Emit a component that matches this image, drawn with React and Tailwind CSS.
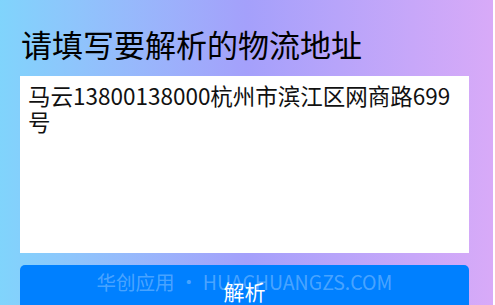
export default function App() {
  const font = { fontFamily: '"Noto Sans CJK SC", "Noto Sans", sans-serif' };
  return (
    <div className="h-[305px] overflow-hidden bg-white pr-[2px]" style={font}>
      <div className="h-full bg-gradient-to-r from-[#80d4fc] via-[#a4a0fb] to-[#d8aaf8] pl-5 pr-[24px]">
        <h1 className="pt-[22px] pl-[1px] text-[31px] font-normal leading-[44px] text-black">
          请填写要解析的物流地址
        </h1>
        <div className="mt-[10px] h-[177px] bg-white px-[8px] pt-[6px] text-[22.5px] leading-[26px] text-[#111]">
          马云13800138000杭州市滨江区网商路699号
        </div>
        <div className="relative mt-[12px] flex h-[48px] justify-center rounded-[5px] bg-[#0080ff] pt-[8px]">
          <span className="text-[21px] leading-[36px] text-white">解析</span>
          <div className="pointer-events-none absolute inset-x-0 top-[2px] flex justify-center text-[19.5px] leading-[30px] text-white/30">
            华创应用 • HUACHUANGZS.COM
          </div>
        </div>
      </div>
    </div>
  );
}
